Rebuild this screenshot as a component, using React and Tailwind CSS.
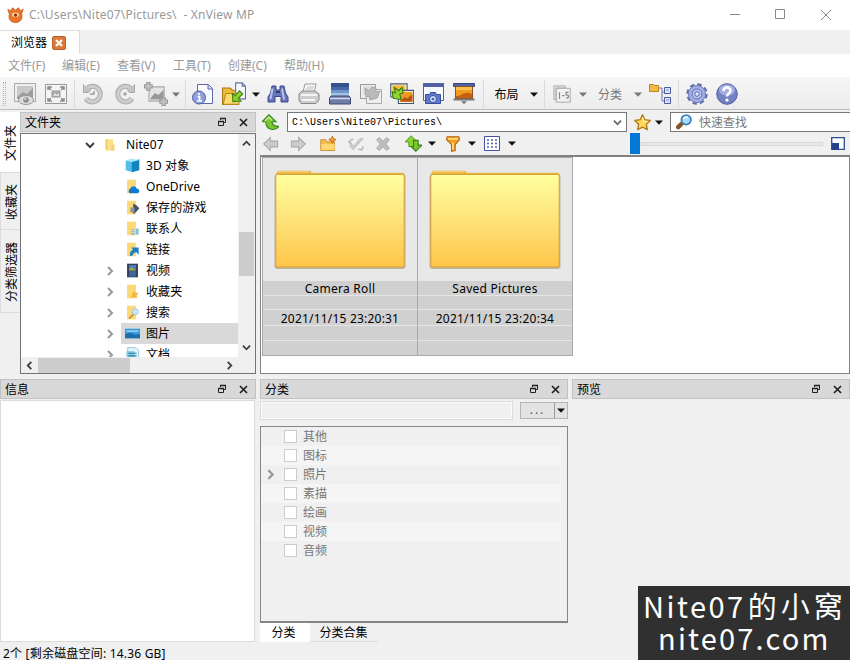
import React from "react";

const Svg = ({ s = 22, children }) => (
  <svg width={s} height={s} viewBox="0 0 22 22" fill="none" className="block shrink-0">{children}</svg>
);

const Arrow = ({ c = "#111" }) => (
  <svg width="8" height="5" viewBox="0 0 8 5" className="block shrink-0"><path d="M0 0.5h8L4 4.7z" fill={c} /></svg>
);

const Chevron = ({ dir = "right", c = "#404040", s = 9 }) => {
  const d = { right: "M3 1l4 4-4 4", left: "M7 1L3 5l4 4", up: "M1 7l4-4 4 4", down: "M1 3l4 4 4-4" }[dir];
  return <svg width={s} height={s} viewBox="0 0 10 10" className="block shrink-0"><path d={d} stroke={c} strokeWidth="2" fill="none" /></svg>;
};

const Sep = () => <i className="h-7 w-px bg-[#dadada]" />;

const I = {
  view: <Svg><path d="M.5.5h21v18H.5z" fill="#eee" stroke="#aaa" /><path d="M3 3h16v13H3z" fill="#c9c9c9" /><path d="M3 14l6-5 4 2 6-6v11H3z" fill="#9c9c9c" /><ellipse cx="12" cy="17" rx="7.5" ry="4.5" fill="#ddd" stroke="#999" /><circle cx="12" cy="17" r="2.8" fill="#8c8c8c" /><circle cx="11.3" cy="16" r="1" fill="#eee" /></Svg>,
  full: <Svg><path d="M.5 1.500h21v19H.5z" fill="#f4f4f4" stroke="#999" /><path d="M7 8h8v6H7z" fill="#aaa" stroke="#999" /><path d="M8 13l2-3 2 2 2-2v3z" fill="#ddd" /><path d="M3 7V4h4M15 4h4v3M19 15v3h-4M7 18H3v-3M3 4l3 3M19 4l-3 3M3 18l3-3M19 18l-3-3" stroke="#888" strokeWidth="1.500" /></Svg>,
  rotL: <Svg><path d="M5 5.500A7.800 7.800 0 1 1 4 15.500" stroke="#a8a8a8" strokeWidth="5" /><path d="M5 5.500A7.800 7.800 0 1 1 4 15.500" stroke="#cdcdcd" strokeWidth="3.200" /><path d="M1.500 1.500v8h5l2.500-3" fill="#c4c4c4" stroke="#a8a8a8" /><path d="M8 11h4V8" stroke="#9c9c9c" strokeWidth="1.500" /></Svg>,
  rotR: <Svg><path d="M17 5.500A7.800 7.800 0 1 0 18 15.500" stroke="#a8a8a8" strokeWidth="5" /><path d="M17 5.500A7.800 7.800 0 1 0 18 15.500" stroke="#cdcdcd" strokeWidth="3.200" /><path d="M20.500 1.500v8h-5l-2.500-3" fill="#c4c4c4" stroke="#a8a8a8" /><circle cx="11" cy="11" r="1.800" fill="#a8a8a8" /></Svg>,
  crop: <Svg s={24}><path d="M4.500 4.500h14v13h-14z" fill="#e4e4e4" stroke="#aaa" /><path d="M6 15l4-5 3 2 5-5v9H6z" fill="#999" /><path d="M4 0v8M0 4h8M18 14v8M14 18h8" stroke="#999" strokeWidth="4" /><path d="M4 1v6M1 4h6M18 15v6M15 18h6" stroke="#c4c4c4" strokeWidth="2" /></Svg>,
  info: <Svg><path d="M5.500 1.500h11l4 4v15h-15z" fill="#fafaff" stroke="#5c68a8" /><path d="M16 1.500v4.500h4.500" fill="#d5daf3" stroke="#5c68a8" /><circle cx="7" cy="14.500" r="6.500" fill="#8fa0dc" stroke="#4c5da8" /><path d="M7 10v2M5.500 13.500H7.500v4.500M5 18h5" stroke="#fff" strokeWidth="1.700" /></Svg>,
  open: <Svg s={24}><path d="M.5 5.500h7l2 2h5V20.500H.5z" fill="#efbc39" stroke="#a5781c" /><path d="M12.500.8h6l3 3v11.700h-9z" fill="#f5f8ff" stroke="#647498" /><path d="M18.500.8v3h3" stroke="#647498" /><path d="M3.500 10.500h12v10H1z" fill="#fbdb6a" stroke="#b88824" /><path d="M10 18l-.5-7.500 2.500 2 4-4.500 3 3-4 4 2.500 2.500z" fill="#8cd12c" stroke="#417f17" /></Svg>,
  find: <Svg><path d="M5 3h4v4h4V3h4l1.500 7 2.500 4v5h-7v-5.500h-6V19H1v-5l2.500-4z" fill="#6675b8" stroke="#3d4a8d" /><path d="M5.500 5.500L3.500 16M15 5.500l2 11" stroke="#b8c2ef" strokeWidth="2" /><path d="M9 9h4" stroke="#2f3b75" strokeWidth="2" /></Svg>,
  print: <Svg><path d="M5 9L7 1h11l-2 9" fill="#fafafa" stroke="#999" /><path d="M1 11l3-3h13l4 3v6l-3 3.500H3l-2-3z" fill="#cdcdcd" stroke="#888" /><path d="M3 12h16M4 17h13" stroke="#f4f4f4" strokeWidth="2" /><path d="M9 4h7M8 6h7" stroke="#bbb" /></Svg>,
  scan: <Svg><path d="M2 0h18v14H2z" fill="#34508e" /><path d="M2 4h18v10H2z" fill="#4468a8" /><path d="M2 7h18v7H2z" fill="#6f95c9" /><path d="M2 10h18v4H2z" fill="#a5c3e5" /><path d="M.5 15l1.500-2h18l1.500 2v6H.5z" fill="#6e7ca8" stroke="#3b4973" /><path d="M1 15.500h20" stroke="#d5dcee" strokeWidth="1.500" /></Svg>,
  convert: <Svg><path d="M.5 1.500h15v14H.5z" fill="#eee" stroke="#999" /><path d="M6.500 6.500h15v14h-15z" fill="#eee" stroke="#aaa" /><path d="M3 3h10v9H3z" fill="#ddd" /><path d="M5 5l4 3 3-4 4 1v4l4-1-3 7-7 2-1-4-3 1z" fill="#bbb" stroke="#a5a5a5" /></Svg>,
  batch: <Svg s={24}><path d="M.7 1.700h15v12h-15z" fill="#fff9ce" stroke="#44547c" /><path d="M2 3h12v9H2z" fill="#f4b93f" /><path d="M7.700 7.700h14v12h-14z" fill="#fff9ce" stroke="#44547c" /><path d="M9 9h11.500v9H9z" fill="#f09a26" /><path d="M9 18l4-4 3 1 4.500-4v7z" fill="#b8541a" /><path d="M2 9l3 1-1-5 4 3 3-3 1 5-3 1 1 5-7-1z" fill="#93d72e" stroke="#347916" /></Svg>,
  capture: <Svg><path d="M1.500.5h20v17h-20z" fill="#f8faff" stroke="#5260a0" /><path d="M1 0h21v4H1z" fill="#5261a6" /><path d="M3.500 11.500h4l1-2h5l1 2h4v9h-15z" fill="#5f79c8" stroke="#3550a0" /><circle cx="11" cy="16" r="3.500" fill="#dce5ff" stroke="#3d509a" /><circle cx="11" cy="16" r="1.500" fill="#5268b4" /></Svg>,
  slide: <Svg><path d="M.5.500h21v3H.5z" fill="#5262a4" stroke="#354680" /><path d="M2.500 3.500h17v12h-17z" fill="#f39a22" stroke="#855229" /><path d="M3 13c5 1 8-6 16-2v4H3z" fill="#c6600f" /><path d="M3 4h16v3H3z" fill="#ffc04a" /><path d="M.5 15.500h21v2H.5z" fill="#777" /><path d="M8 18h6l-3 3.500z" fill="#888" /></Svg>,
  num: <Svg s={18}><path d="M1 1h14v3H4v14H1z" fill="#ddd" stroke="#aaa" /><path d="M4 4h17v17H4z" fill="#f2f2f2" stroke="#999" /><path d="M8 9v8M11 13h3M19 9h-3v3c4 0 4 4 0 4" stroke="#888" strokeWidth="1.400" /></Svg>,
  tree: <Svg><path d="M.5 1.500h4l1 1h4v6h-9z" fill="#f5b944" stroke="#b88422" /><path d="M10 5h3v13H16M13 9H16" stroke="#6b77b3" /><path d="M15.500 4.500h6v6h-6zM15.500 14.500h6v6h-6z" fill="#dfe5ff" stroke="#4c5aa0" /><path d="M17 7h3M17 17h3" stroke="#7886c4" /></Svg>,
  gear: <Svg><circle cx="11" cy="11" r="9" stroke="#626fae" strokeWidth="3.400" strokeDasharray="4.200 2.870" /><circle cx="11" cy="11" r="8.600" fill="#a3aee2" stroke="#7381bf" /><circle cx="11" cy="11" r="5" fill="#b9c4f0" stroke="#6673b5" /><circle cx="11" cy="11" r="2.300" fill="#e0e6ff" stroke="#5866a5" /></Svg>,
  help: <Svg><circle cx="11" cy="11" r="10.300" fill="#7381c4" stroke="#56629d" /><ellipse cx="11" cy="7" rx="8" ry="5.500" fill="#a3afe4" /><path d="M7.500 8c0-5 7-4.500 7-.5 0 3-3.500 3-3.500 6" stroke="#fff" strokeWidth="2.600" /><circle cx="11" cy="17" r="1.600" fill="#fff" /></Svg>,
  left: <Svg s={16}><path d="M1 11L10 2v5h10v8H10v5z" fill="#ccc" stroke="#aaa" strokeWidth="1.500" /></Svg>,
  right: <Svg s={16}><path d="M21 11l-9-9v5H2v8h10v5z" fill="#ccc" stroke="#aaa" strokeWidth="1.500" /></Svg>,
  newF: <Svg s={16}><path d="M1 5h7l2 3h10v12H1z" fill="#f6bd4a" stroke="#b97b20" /><path d="M2 11h18v8H2z" fill="#ffd876" /><path d="M17 0l1.500 3.500L22 5l-3.500 1.500L17 10l-1.500-3.500L12 5l3.500-1.500z" fill="#ff9f2c" stroke="#a95f13" /></Svg>,
  edit: <Svg s={16}><path d="M2 13l5 6L21 3l-5 1-8 10-3-3z" fill="#ccc" stroke="#b5b5b5" /><path d="M7 4L1 8l4 3M14 18l5 1 2-5" stroke="#b5b5b5" strokeWidth="2" /></Svg>,
  del: <Svg s={16}><path d="M2 5l4-3 5 5 5-5 4 3-5 6 5 6-4 3-5-5-5 5-4-3 5-6z" fill="#bdbdbd" stroke="#a5a5a5" /></Svg>,
  swap: <Svg s={17}><path d="M0 9l8-8 6 6h-3v8H5V9z" fill="#8ed62b" stroke="#4b9a22" strokeWidth="1.200" /><path d="M22 13l-8 8-6-6h3V7h6v6z" fill="#7cc62b" stroke="#34851c" strokeWidth="1.500" /></Svg>,
  filter: <Svg s={16}><path d="M3 1h16l1 4-6 7v8l-5 1v-9L2 5z" fill="#f39c24" stroke="#b66510" strokeWidth="1.500" /><path d="M4 4h14M11 9v10" stroke="#ffdc7a" strokeWidth="2.500" /></Svg>,
  up: <Svg s={17}><path d="M0 10L9 1l9 9h-5c0 4 3 6 9 6-4 6-17 6-17-6z" fill="#7cc62f" stroke="#378822" strokeWidth="1.500" /><path d="M4 9l5-5 4 4" stroke="#c4ed93" strokeWidth="2" /></Svg>,
  star: <Svg s={17}><path d="M11 1l3 6.500 7 .8-5 5 1.200 7L11 17l-6.200 3.300L6 13.300l-5-5 7-.8z" fill="#ffd95e" stroke="#b47c1d" strokeWidth="1.800" strokeLinejoin="round" /><path d="M11 4l1.500 5 5 .8" stroke="#fff1b4" strokeWidth="1.500" /></Svg>,
  search: <Svg s={16}><path d="M8 13l-5 5" stroke="#8a5428" strokeWidth="6" strokeLinecap="round" /><circle cx="14" cy="8" r="6.500" fill="#a5dafa" stroke="#3c83ba" strokeWidth="2.500" /><path d="M10.500 7c1-3 4-3.500 6-2" stroke="#fff" strokeWidth="2" /></Svg>,
};

const folder = "M3 1h13v20H3z";
const T = {
  folder: <Svg s={14}><path d="M4 2h12v18H4z" fill="#ffe08a" /><path d="M4 2h3v16H4z" fill="#f4cb62" /><path d="M13 10h5v10h-5z" fill="#f8d373" /></Svg>,
  cube: <Svg s={15}><path d="M1 4l11-3v20L1 18z" fill="#55bdea" /><path d="M10 5l11-3v16l-11 3z" fill="#1484bd" /><path d="M1 4l9-3 11 2-11 3z" fill="#a8e6fa" /></Svg>,
  cloud: <Svg s={15}><path d={folder} fill="#fbd977" /><path d="M7 21a4 4 0 0 1 1-7c2-5 8-4 9 0 5 0 5 7 1 7z" fill="#0f7bd0" /></Svg>,
  game: <Svg s={15}><path d={folder} fill="#fbd977" /><path d="M12 5l5 3 4 4-4 5-5 4z" fill="#4a4e67" /><path d="M8 11h6v7H8z" fill="#8891a3" /></Svg>,
  people: <Svg s={15}><path d={folder} fill="#fbd977" /><path d="M9 12h5v8H9zM16 11h4v9h-4z" fill="#86bfdb" /><path d="M10 14h3M10 17h3" stroke="#fff" /></Svg>,
  link: <Svg s={15}><path d={folder} fill="#fbd977" /><path d="M7 20c0-5 2-8 5-9l-3-3h11v11l-3-4c-4 0-5 2-6 5z" fill="#1b7fc8" /></Svg>,
  video: <Svg s={15}><path d="M3 1h16v20H3z" fill="#36405d" /><path d="M6 3h10v8H6z" fill="#4b7fba" /><path d="M6 8l4-2 6 5H6z" fill="#9aa43e" /><path d="M6 12h10v8H6z" fill="#3d679d" /></Svg>,
  fav: <Svg s={15}><path d={folder} fill="#fbd977" /><path d="M13 10l2 3h5l-3 4 1 4-5-2-5 2z" fill="#f4b93f" /></Svg>,
  searchF: <Svg s={15}><path d={folder} fill="#fbd977" /><path d="M13 13l-7 7" stroke="#cc9142" strokeWidth="2.500" /><circle cx="15" cy="10" r="4.500" fill="#cbe7f7" stroke="#8ab8d3" /></Svg>,
  pic: <Svg s={15}><path d="M0 4h22v14H0z" fill="#329bdc" /><path d="M0 12l8-2 6 3 8-1v6H0z" fill="#1c6fab" /><path d="M2 6h18v3H2z" fill="#81caf1" /></Svg>,
  doc: <Svg s={15}><path d="M4 1h12l4 4v16H4z" fill="#e5f5fb" stroke="#6baecd" /><path d="M2 6h12v10H2z" fill="#8bcbe2" /><path d="M5 9h12M5 13h12" stroke="#277ba5" strokeWidth="1.500" /></Svg>,
};

const rows = [
  ["cube", "3D 对象"], ["cloud", "OneDrive"], ["game", "保存的游戏"], ["people", "联系人"], ["link", "链接"],
  ["video", "视频", 1], ["fav", "收藏夹", 1], ["searchF", "搜索", 1], ["pic", "图片", 1, 1], ["doc", "文档", 1],
];

const Header = ({ title }) => (
  <div className="flex h-[20px] shrink-0 items-center border border-[#c2c2c2] bg-[#d8d8d8] pl-1 pr-[7px]">
    <span className="flex-1 pt-px">{title}</span>
    <svg width="10" height="10" viewBox="0 0 10 10" className="mr-3 block" fill="none"><path d="M3.500 3V1.500h5v4H7" stroke="#222" /><path d="M3 1.500h6" stroke="#222" strokeWidth="1.500" /><path d="M1.500 4.500h5v4h-5z" stroke="#222" /><path d="M1 4.500h6" stroke="#222" strokeWidth="1.500" /></svg>
    <svg width="9" height="9" viewBox="0 0 9 9" className="block"><path d="M1 1l7 7M8 1L1 8" stroke="#222" strokeWidth="1.700" /></svg>
  </div>
);

const SideTab = ({ children, className }) => (
  <div className={"flex items-center justify-center pl-[2px] pt-[2px] " + className}>
    <span className="rotate-180 [writing-mode:vertical-rl] [text-orientation:sideways]">{children}</span>
  </div>
);

const Thumb = ({ id, name, date }) => (
  <div className="h-[199px] w-[156px] border border-[#a9a9a9] bg-[#e8e8e8] -mr-px">
    <div className="flex h-[123px] justify-center pt-[12px]">
      <svg width="134" height="102" viewBox="0 0 134 102" className="block">
        <defs><linearGradient id={id} x1="0" y1="0" x2="0" y2="1"><stop offset="0" stopColor="#ffff9e" /><stop offset=".5" stopColor="#fee27a" /><stop offset="1" stopColor="#ffc648" /></linearGradient></defs>
        <rect x="1.500" y="4" width="131" height="95" rx="3" fill="#9c8a60" opacity=".55" />
        <path d="M3 3.500L5 .8h32l2 2h91.500l1 1.500v10H3z" fill="#eab540" />
        <path d="M5 1.800h31" stroke="#fbd98a" />
        <rect x="2.800" y="4.500" width="128.400" height="92.500" rx="1.500" fill={`url(#${id})`} stroke="#d7a13c" />
      </svg>
    </div>
    <div className="flex h-[74px] flex-col bg-[#d0d0d0] text-center">
      <div className="h-[15px] border-b border-[#e6e6e6] leading-[15px] tracking-[0.25px]">{name}</div>
      <div className="h-[14px] border-b border-[#e6e6e6]" />
      <div className="h-[16px] border-b border-[#e6e6e6] leading-[17px] tracking-[0.2px]">{date}</div>
      <div className="h-[15px] border-b border-[#e6e6e6]" />
    </div>
  </div>
);

export default function App() {
  return (
    <div className="relative flex h-[660px] w-[850px] flex-col overflow-hidden whitespace-nowrap bg-[#f0f0f0] font-['Noto_Sans','Noto_Sans_CJK_SC',sans-serif] text-[12px] leading-[16px] text-black">
      <div className="flex h-[30px] shrink-0 items-center bg-white pl-[7px] text-[#999]">
        <Svg s={17}><path d="M3 9L1 3l4 2 2-4 4 3 4-3 2 4 4-2-2 6c4 15-20 15-16 0z" fill="#e8752a" stroke="#c65e22" /><ellipse cx="11" cy="10" rx="4.500" ry="3" fill="#ffcf98" /><circle cx="11" cy="10.500" r="2.200" fill="#8c3a14" /></Svg>
        <span className="ml-[5px] flex-1 whitespace-pre text-[12px] tracking-[0.2px]">C:\Users\Nite07\Pictures\  - XnView MP</span>
        <svg width="104" height="12" viewBox="0 0 104 12" className="mr-[17px] block" fill="none" stroke="#888"><path d="M1 5.500h10M46.500.5h9v9h-9zM92 1l10 10M102 1L92 11" /></svg>
      </div>
      <div className="flex h-[24px] shrink-0">
        <div className="flex w-[80px] items-center border-r border-t border-[#dcdcdc] bg-white pl-[11px]">
          <span>浏览器</span>
          <span className="ml-[5px] flex h-[14px] w-[14px] items-center justify-center rounded-[2px] border border-[#b9622b] bg-[#dc7a38]"><svg width="8" height="8" viewBox="0 0 8 8"><path d="M1 1l6 6M7 1L1 7" stroke="#fff" strokeWidth="2.200" /></svg></span>
        </div>
      </div>
      <div className="flex h-[23px] shrink-0 items-center gap-[16px] bg-white pl-[8px] text-[#999]">
        <span className="w-[38px]">文件(F)</span><span className="w-[39px]">编辑(E)</span><span className="w-[40px]">查看(V)</span><span className="w-[39px]">工具(T)</span><span className="w-[40px]">创建(C)</span><span>帮助(H)</span>
      </div>
      <div className="grid h-[33px] shrink-0 grid-cols-[9px_32px_30px_7px_30px_33px_29px_12px_6px_29px_33px_12px_31px_31px_31px_32px_30px_31px_31px_8px_39px_15px_6px_30px_12px_42px_14px_30px_7px_29px_32px] items-center justify-items-center border-b border-[#bdbdbd] bg-linear-to-b from-[#f6f6f6] to-[#ececec] pt-[2px]">
        <i className="h-6 w-[3px] border-x border-dotted border-[#b5b5b5]" />
        {I.view}{I.full}<Sep />{I.rotL}{I.rotR}{I.crop}<Arrow c="#777" /><Sep />{I.info}{I.open}<Arrow />{I.find}{I.print}{I.scan}{I.convert}{I.batch}{I.capture}{I.slide}<Sep />
        <span className="pt-px">布局</span><Arrow /><Sep />{I.num}<Arrow c="#777" /><span className="pt-px text-[#777]">分类</span><Arrow c="#777" />{I.tree}<Sep />{I.gear}{I.help}
      </div>

      <div className="flex h-[264px] shrink-0">
        <div className="flex w-[20px] shrink-0 flex-col pt-[2px]">
          <SideTab className="h-[60px] bg-white">文件夹</SideTab>
          <SideTab className="h-[58px] border border-r-0 border-[#dcdcdc]">收藏夹</SideTab>
          <SideTab className="h-[83px] border border-r-0 border-t-0 border-[#dcdcdc]">分类筛选器</SideTab>
        </div>
        <div className="flex w-[236px] shrink-0 flex-col pt-[2px]">
          <Header title="文件夹" />
          <div className="mt-px flex h-[241px] flex-col border border-[#70747a] bg-white">
            <div className="flex h-[223px]">
              <div className="w-[217px] overflow-hidden">
                <div className="flex h-[21px] items-center pl-[64px]"><Chevron dir="down" s={10} /><span className="ml-[8px]">{T.folder}</span><span className="ml-[9px] tracking-[0.1px]">Nite07</span></div>
                {rows.map(([ic, name, exp, sel]) => (
                  <div key={name} className="flex h-[21px] items-center pl-[84px]">
                    <span className="w-[16px]">{exp && <Chevron c="#999" s={10} />}</span>
                    <span className={"flex h-full flex-1 items-center pl-[4px] " + (sel ? "bg-[#d9d9d9]" : "")}>{T[ic]}<span className="ml-[6px] pt-px tracking-[0.1px]">{name}</span></span>
                  </div>
                ))}
              </div>
              <div className="flex w-[17px] flex-col items-center bg-[#f0f0f0] pt-[5px]">
                <Chevron dir="up" /><div className="mt-[84px] h-[44px] w-[15px] bg-[#cdcdcd]" /><div className="mt-[67px]"><Chevron dir="down" /></div>
              </div>
            </div>
            <div className="flex h-[16px] items-center bg-[#f0f0f0] pl-[4px]"><Chevron dir="left" /><div className="ml-[4px] h-[15px] w-[92px] bg-[#cdcdcd]" /><div className="ml-[95px]"><Chevron /></div></div>
          </div>
        </div>
        <div className="ml-[4px] flex flex-1 flex-col pt-[2px]">
          <div className="flex h-[20px] items-center pl-[2px]">
            {I.up}
            <div className="ml-[8px] flex h-[20px] w-[340px] items-center justify-between border border-[#777] bg-white pl-[4px] pr-[4px] font-['Liberation_Mono',monospace] text-[10px]"><span className="pt-px">C:\Users\Nite07\Pictures\</span><Chevron dir="down" c="#666" /></div>
            <div className="ml-[7px]">{I.star}</div><div className="ml-[4px]"><Arrow /></div>
            <div className="ml-[7px] flex h-[20px] flex-1 items-center border border-r-0 border-[#777] bg-white pl-[5px] text-[#777]">{I.search}<span className="ml-[7px] pt-px">快速查找</span></div>
          </div>
          <div className="flex h-[23px] items-center">
            <div className="grid h-full w-[260px] grid-cols-[22px_32px_28px_28px_26px_34px_4px_38px_0px_40px_0px] items-center justify-items-center">
              {I.left}{I.right}{I.newF}{I.edit}{I.del}{I.swap}<Arrow />{I.filter}<Arrow />
              <svg width="16" height="15" viewBox="0 0 16 15"><path d="M.5.5h15v14H.5z" fill="#fff" stroke="#4450a0" />{[4, 7.500, 11].map((y) => <path key={y} d={`M3 ${y}h2M7 ${y}h2M11 ${y}h2`} stroke="#5560b0" strokeWidth="1.500" />)}</svg>
              <Arrow />
            </div>
            <div className="ml-[102px] flex h-full w-[201px] items-center pl-[8px]"><div className="h-[21px] w-[10px] bg-[#0078d7]" /><div className="h-[4px] flex-1 border border-[#dadada] bg-[#e7e7e7]" /></div>
            <svg width="14" height="13" viewBox="0 0 14 13" className="ml-[8px]"><path d="M.7.7h12.600v11.600H.7z" fill="#fff" stroke="#2f4a91" strokeWidth="1.300" /><path d="M1 6h7v7H1z" fill="#24428f" /></svg>
          </div>
          <div className="flex flex-1 border-2 border-[#828282] border-b border-l border-r bg-white pl-px">
            <Thumb id="f1" name="Camera Roll" date="2021/11/15 23:20:31" />
            <Thumb id="f2" name="Saved Pictures" date="2021/11/15 23:20:34" />
          </div>
        </div>
      </div>

      <div className="flex h-[268px] shrink-0 pt-[5px]">
        <div className="flex w-[256px] flex-col"><Header title="信息" /><div className="mt-px h-[242px] w-[255px] border border-[#dcdcdc] bg-white" /></div>
        <div className="ml-[4px] flex w-[308px] flex-col">
          <Header title="分类" />
          <div className="mt-[2px] flex h-[19px]">
            <div className="w-[253px] border-2 border-[#fafafa] outline outline-1 -outline-offset-1 outline-[#dcdcdc]" />
            <div className="ml-[7px] mt-px flex h-[17px] flex-1 border border-[#b5b5b5] bg-[#e3e3e3] text-[#555]"><span className="w-[34px] border-r border-[#999] text-center leading-[14px] tracking-[2px]">...</span><span className="flex flex-1 items-center justify-center"><Arrow /></span></div>
          </div>
          <div className="mt-[6px] h-[198px] border border-b-2 border-[#858585] pr-[6px] text-[#777]">
            {["其他", "图标", "照片", "素描", "绘画", "视频", "音频"].map((n, i) => (
              <div key={n} className={"flex h-[19px] items-center pl-[4px] " + (i % 2 ? "bg-[#f5f5f5]" : "")}><span className="w-[19px]">{i === 2 && <Chevron c="#999" s={11} />}</span><span className="h-[13px] w-[13px] border border-[#ccc] bg-white" /><span className="ml-[6px] pt-px">{n}</span></div>
            ))}
          </div>
          <div className="flex h-[19px]"><span className="w-[50px] bg-white pr-[3px] text-center leading-[20px]">分类</span><span className="w-[68px] border-b border-[#dcdcdc] pr-px text-center leading-[19px]">分类合集</span></div>
        </div>
        <div className="ml-[4px] flex-1"><Header title="预览" /></div>
      </div>
      <div className="flex pl-[3px] pt-[4px] leading-[14px] tracking-[0.2px]"><span className="pt-px">2个 [剩余磁盘空间: 14.36 GB]</span></div>

      <div className="absolute bottom-0 right-0 flex h-[74px] w-[212px] flex-col bg-[#303030] pt-[5px] font-['Noto_Sans_CJK_SC',sans-serif] text-[29px] text-white">
        <div className="h-[32px] pl-[5px] leading-none"><span className="tracking-[2.500px]">Nite07</span><span className="ml-[2px] text-[29px] tracking-[4px]">的小窝</span></div>
        <div className="h-[32px] pl-[20px] leading-none tracking-[2.200px]">nite07.com</div>
      </div>
    </div>
  );
}
